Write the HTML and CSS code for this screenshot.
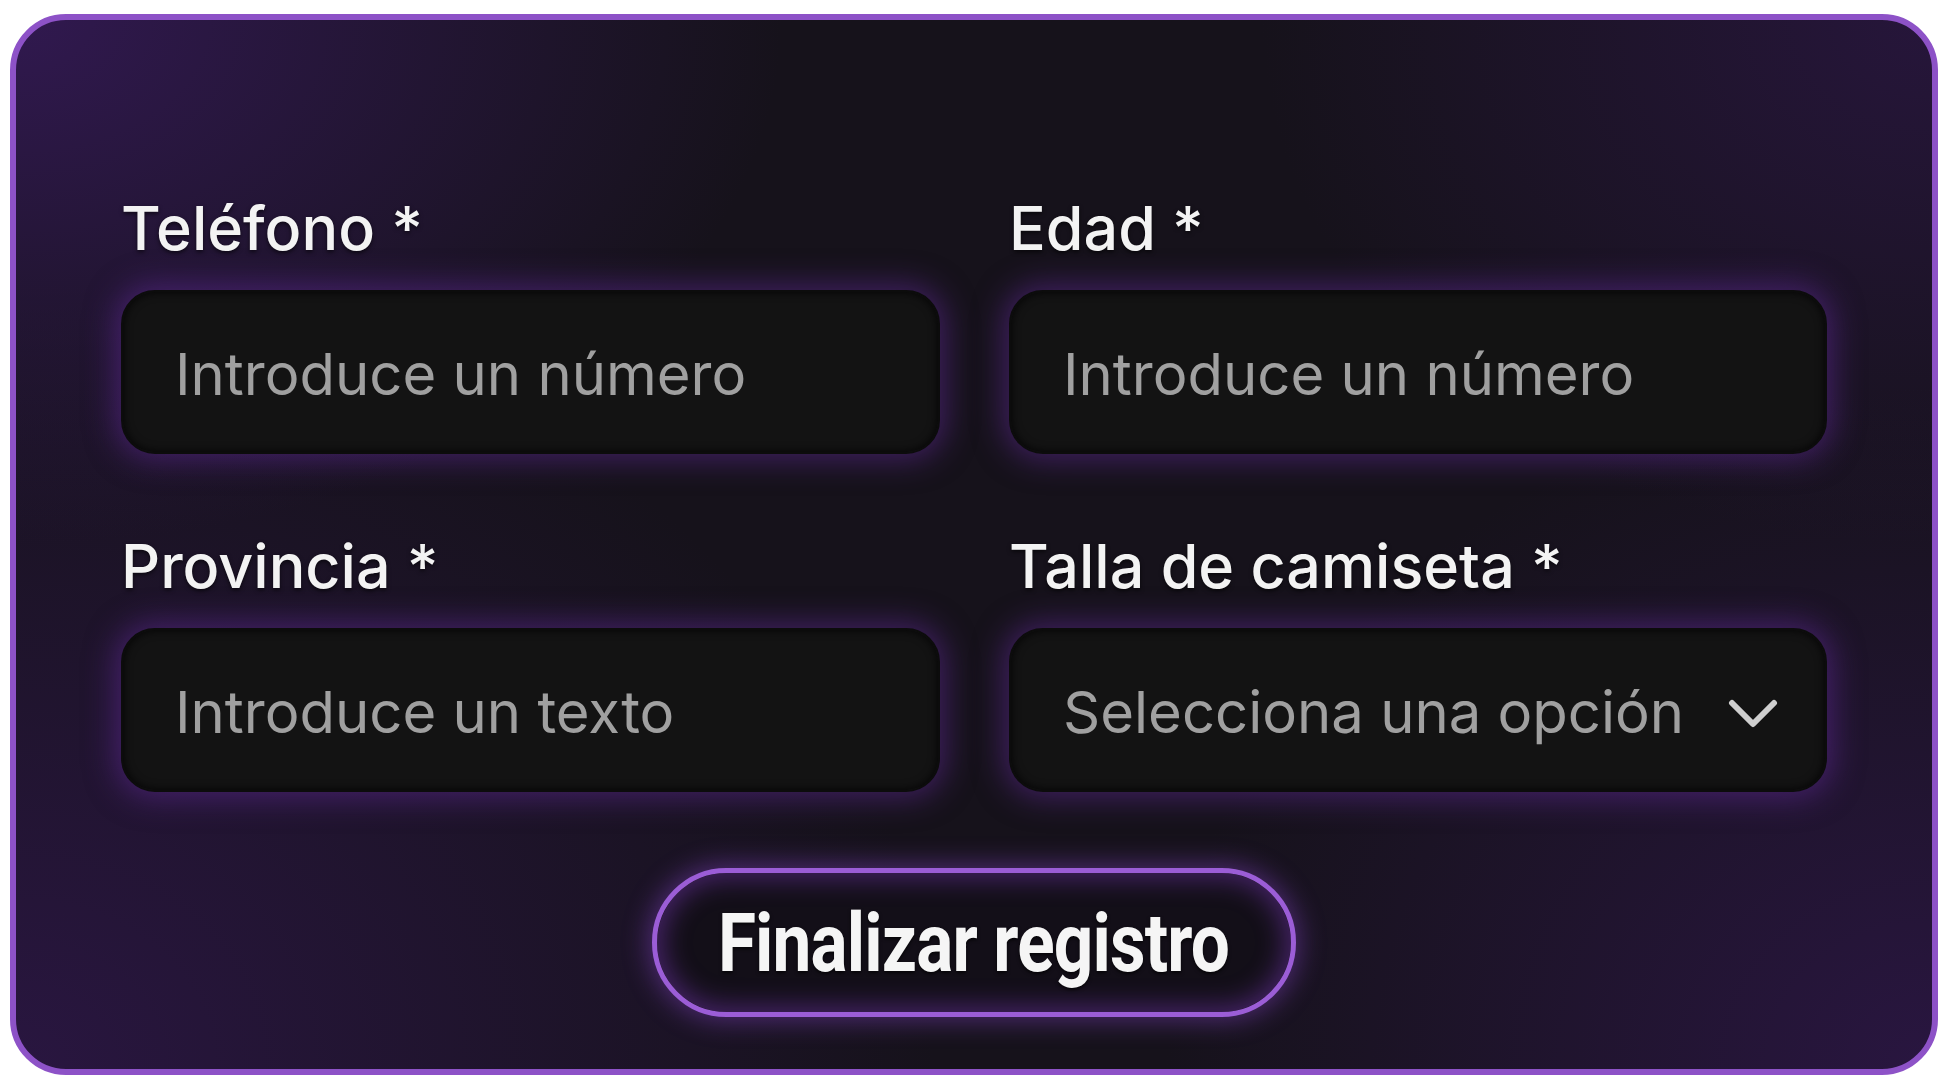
FILE: index.html
```html
<!DOCTYPE html>
<html lang="es">
<head>
<meta charset="utf-8">
<title>Registro</title>
<link rel="stylesheet" href="styles.css">
</head>
<body>
<form class="card">
  <div class="grid">
    <div class="field">
      <label class="label" for="tel">Teléfono *</label>
      <input class="control" id="tel" type="text" placeholder="Introduce un número">
    </div>
    <div class="field">
      <label class="label" for="edad">Edad *</label>
      <input class="control" id="edad" type="text" placeholder="Introduce un número">
    </div>
    <div class="field">
      <label class="label" for="prov">Provincia *</label>
      <input class="control" id="prov" type="text" placeholder="Introduce un texto">
    </div>
    <div class="field">
      <span class="label">Talla de camiseta *</span>
      <div class="control select">
        <span class="select-text">Selecciona una opción</span>
        <svg class="chevron" width="50" height="32" viewBox="0 0 50 32" aria-hidden="true">
          <path d="M4 5 L25 26 L46 5" fill="none" stroke="#cfcfcf" stroke-width="6" stroke-linecap="round" stroke-linejoin="round"/>
        </svg>
      </div>
    </div>
  </div>
  <div class="actions">
    <button class="submit" type="button"><span class="submit-text">Finalizar registro</span></button>
  </div>
</form>
</body>
</html>
```
FILE: styles.css
```css
* { box-sizing: border-box; }

html, body {
  margin: 0;
  padding: 0;
  background: #ffffff;
}

body {
  padding: 14px 0 0 10px;
  font-family: "Inter", "Noto Sans", sans-serif;
}

.card {
  width: 1928px;
  height: 1061px;
  border: 6px solid #8d52c7;
  border-radius: 56px;
  padding: 170px 105px 0 105px;
  background:
    radial-gradient(ellipse 40% 50% at 0% 0%, rgba(50, 25, 82, 0.95), rgba(50, 25, 82, 0) 100%),
    radial-gradient(ellipse 48% 75% at 0% 100%, rgba(42, 22, 66, 0.95), rgba(42, 22, 66, 0) 100%),
    radial-gradient(ellipse 40% 65% at 100% 100%, rgba(42, 22, 66, 0.95), rgba(42, 22, 66, 0) 100%),
    radial-gradient(ellipse 35% 50% at 100% 0%, rgba(40, 22, 62, 0.9), rgba(40, 22, 62, 0) 100%),
    #16121b;
  display: flex;
  flex-direction: column;
}

.grid {
  display: grid;
  grid-template-columns: 819px 818px;
  column-gap: 69px;
  row-gap: 74px;
}

.field {
  display: flex;
  flex-direction: column;
  gap: 24px;
}

.label {
  font-family: "Inter", "Noto Sans", sans-serif;
  font-weight: 500;
  font-size: 61px;
  line-height: 76px;
  height: 76px;
  color: #f3f3f3;
  text-shadow: 0 2px 4px rgba(0, 0, 0, 0.6);
  white-space: nowrap;
}

.control {
  display: block;
  width: 100%;
  height: 164px;
  margin: 0;
  padding: 4px 50px 0 52px;
  border: 2px solid #0c0c0c;
  border-radius: 34px;
  background: #131313;
  box-shadow:
    0 0 30px 6px rgba(104, 44, 164, 0.5),
    inset 0 0 10px rgba(0, 0, 0, 0.85);
  font-family: "Inter", "Noto Sans", sans-serif;
  font-weight: 400;
  font-size: 58px;
  color: #a0a0a0;
  outline: none;
}

.control::placeholder {
  color: #a0a0a0;
  opacity: 1;
}

.select {
  display: flex;
  align-items: center;
  justify-content: space-between;
  padding-right: 47px;
}

.select-text {
  white-space: nowrap;
  line-height: 1;
}

.chevron {
  display: block;
  flex: none;
  margin-top: 4px;
}

.actions {
  display: flex;
  justify-content: center;
  margin-top: 76px;
}

.submit {
  width: 644px;
  height: 149px;
  border: 5px solid #9b5dd6;
  border-radius: 75px;
  background: #130f18;
  box-shadow:
    0 0 26px 4px rgba(140, 70, 210, 0.45),
    inset 0 0 26px 6px rgba(130, 60, 200, 0.45);
  display: flex;
  align-items: center;
  justify-content: center;
  padding: 0;
  cursor: pointer;
}

.submit-text {
  display: inline-block;
  font-family: "Roboto", "Liberation Sans", sans-serif;
  font-weight: 700;
  font-size: 82px;
  line-height: 1;
  color: #f5f5f5;
  white-space: nowrap;
  letter-spacing: -1px;
  transform: scaleX(0.845);
  text-shadow: 0 2px 4px rgba(0, 0, 0, 0.7);
}
```
